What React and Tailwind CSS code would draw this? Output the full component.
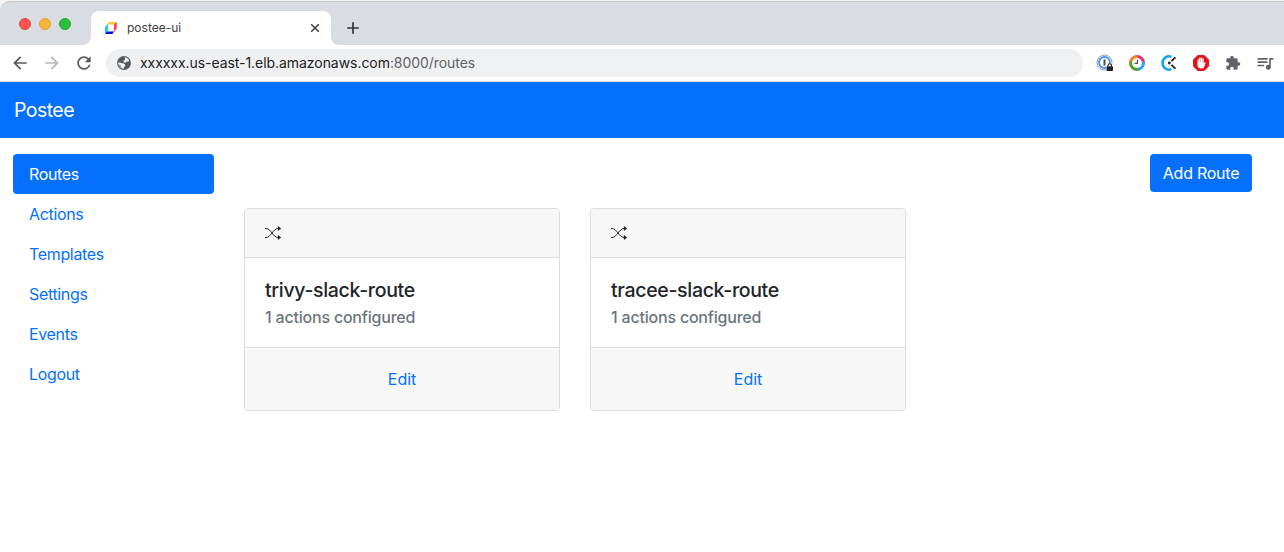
import {
  MdArrowBack,
  MdArrowForward,
  MdRefresh,
  MdAdd,
  MdExtension,
  MdQueueMusic,
} from 'react-icons/md';

function TabLogo() {
  return (
    <svg className="h-[14px] w-[14px]" viewBox="0 0 14 14" fill="none">
      <path d="M4.6 1H12.6L10.4 3.4H4.6L2.4 6.2Z" fill="#ffc62b" />
      <path d="M12.8 1V7.2L10 11V3.2Z" fill="#ff445f" />
      <path d="M3.8 2.8V10.6L1 13V6.4Z" fill="#10c2f0" />
      <path d="M3.4 10.4H10.2L8.4 13H1Z" fill="#1207d8" />
    </svg>
  );
}

function CloseIcon() {
  return (
    <svg className="h-[14px] w-[14px]" viewBox="0 0 14 14" fill="none">
      <path d="M3.2 3.2L10.8 10.8M10.8 3.2L3.2 10.8" stroke="#3c4043" strokeWidth="1.5" />
    </svg>
  );
}

function GlobeIcon() {
  return (
    <svg className="h-4 w-4" viewBox="0 0 16 16">
      <circle cx="8" cy="8" r="6.9" fill="#54585d" />
      <path
        d="M8.7 2.3C10.5 2.5 12.3 3.6 13.1 5.3L12.3 6.7L10.6 6.5L9.7 7.8L7.6 7.3L7.4 5.8L9 4.9Z"
        fill="#eff0f2"
      />
      <path
        d="M2.3 7.3L5.2 8L7.7 8.4L9.5 10L8.8 11.5L7.9 12.2L7.7 13.7C4.6 13.6 2.2 11.2 2.2 8.2Z"
        fill="#eff0f2"
      />
      <path d="M2.3 8.9L4.7 10.3L5.7 13.2C3.8 12.5 2.5 10.9 2.3 8.9Z" fill="#8b8e92" />
    </svg>
  );
}

function PasswordIcon() {
  return (
    <svg className="h-[18px] w-[18px]" viewBox="0 0 18 18">
      <circle cx="8.5" cy="8.5" r="7.5" fill="#fff" stroke="#8a8f94" strokeWidth="0.9" />
      <circle cx="8.5" cy="8.5" r="5.5" fill="#fff" stroke="#4796ef" strokeWidth="1.9" />
      <rect x="7.5" y="5.3" width="2" height="6.2" rx="0.6" fill="#4b5056" />
      <path d="M10 9.5H18V18H10Z" fill="#fff" />
      <rect x="10.5" y="12.3" width="6.5" height="4.7" rx="0.8" fill="#202124" />
      <path d="M12 12.5V11.5a1.75 1.75 0 0 1 3.5 0V12.5" fill="none" stroke="#202124" strokeWidth="1.1" />
    </svg>
  );
}

function ClockRingIcon() {
  return (
    <svg className="h-4 w-4" viewBox="0 0 16 16" fill="none">
      <circle cx="8" cy="8" r="7.8" fill="#f7354f" />
      <path d="M0.2 8A7.8 7.8 0 0 1 8 0.2L11 2.8L2.6 10.5Z" fill="#f7812c" />
      <path d="M8 0.2A7.8 7.8 0 0 1 15.8 8L13.4 10.6L9 2.4Z" fill="#ee2a76" />
      <path d="M15.8 8A7.8 7.8 0 0 1 8 15.8L5.6 13.3L13.3 5.8Z" fill="#27aee8" />
      <path d="M8 15.8A7.8 7.8 0 0 1 0.2 8L2.7 5.7L10 13.5Z" fill="#4da32f" />
      <circle cx="8" cy="8" r="5" fill="#fff" />
      <path d="M8.4 4.8V8.3H5.7" stroke="#555" strokeWidth="1.2" />
    </svg>
  );
}

function TimerIcon() {
  return (
    <svg className="h-4 w-4" viewBox="0 0 16 16" fill="none">
      <path d="M10.4 1.8A6.6 6.6 0 1 0 10.4 14.2" stroke="#12a2ee" strokeWidth="2.5" />
      <circle cx="8.3" cy="8" r="1.4" fill="#222" />
      <path d="M10.4 6.1L14.4 2.4M10.4 9.9L14.4 13.6" stroke="#222" strokeWidth="1.9" />
    </svg>
  );
}

function BlockerIcon() {
  return (
    <svg className="h-4 w-4" viewBox="0 0 16 16">
      <path d="M4.8 0H11.2L16 4.8V11.2L11.2 16H4.8L0 11.2V4.8Z" fill="#e2131b" />
      <path
        d="M4.5 4.6a.7.7 0 0 1 1.3 0V7.4h.3V3.3a.7.7 0 0 1 1.4 0V7.2h.3V2.9a.7.7 0 0 1 1.4 0V7.2h.3V3.7a.7.7 0 0 1 1.3 0V8.8l.8-1.2c.5-.6 1.3-.2 1 .5L11.1 12c-.4.9-1 1.4-2 1.4H7.4C5.7 13.4 4.5 12.2 4.5 10.6Z"
        fill="#fff"
      />
    </svg>
  );
}

function ShuffleIcon() {
  return (
    <svg className="h-4 w-4" viewBox="0 0 16 16" fill="none" stroke="#212529">
      <path d="M0 3.5H1C6 3.5 8 12.5 13 12.5H14" strokeWidth="1" />
      <path d="M0 12.5H1C6 12.5 8 3.5 13 3.5H14" strokeWidth="1" />
      <path
        d="M13 1.3L16 3.5L13 5.7ZM13 10.3L16 12.5L13 14.7Z"
        fill="#212529"
        strokeWidth="0.3"
        strokeLinejoin="round"
      />
    </svg>
  );
}

function TabStrip() {
  return (
    <div className="flex h-[45px] items-end bg-[#f3f3f3] pt-px">
      <div className="flex h-11 w-full items-end rounded-tl-[10px] border-t border-[#c6c6c6] bg-[#d9dce1]">
        <div className="flex h-[42px] w-[83px] gap-2 pl-[19px] pt-[15px]">
          <span className="h-3 w-3 rounded-full border border-[#e2453f] bg-[#ff544e]" />
          <span className="h-3 w-3 rounded-full border border-[#df9c34] bg-[#fdb43d]" />
          <span className="h-3 w-3 rounded-full border border-[#21a535] bg-[#27c13e]" />
        </div>
        <div className="h-2 w-2 bg-white">
          <div className="h-2 w-2 rounded-br-lg bg-[#d9dce1]" />
        </div>
        <div className="flex h-[34px] w-60 items-center rounded-t-lg bg-white pl-[13px] pr-[9px]">
          <TabLogo />
          <span className="ml-[9px] flex-1 text-[12px] text-[#3c4043]">postee-ui</span>
          <CloseIcon />
        </div>
        <div className="h-2 w-2 bg-white">
          <div className="h-2 w-2 rounded-bl-lg bg-[#d9dce1]" />
        </div>
        <div className="flex h-[34px] items-center pl-1">
          <MdAdd className="h-5 w-5 text-[#303235]" />
        </div>
      </div>
    </div>
  );
}

function Toolbar() {
  return (
    <div className="flex h-[37px] items-center border-b border-[#d8dadd] bg-white pr-[3px] pl-[10px]">
      <div className="flex w-24 gap-3 text-[#54585d]">
        <MdArrowBack className="h-5 w-5" />
        <MdArrowForward className="h-5 w-5 text-[#b6b8ba]" />
        <MdRefresh className="h-5 w-5" />
      </div>
      <div className="flex h-7 w-[977px] items-center rounded-full bg-[#eff0f2] pl-[10px]">
        <GlobeIcon />
        <span className="mb-0.5 ml-2 text-[14px] tracking-[-0.055px] text-[#202124]">
          xxxxxx.us-east-1.elb.amazonaws.com<span className="text-[#5f6368]">:8000/routes</span>
        </span>
      </div>
      <div className="ml-auto grid auto-cols-[32px] grid-flow-col items-center justify-items-center">
        <PasswordIcon />
        <ClockRingIcon />
        <TimerIcon />
        <BlockerIcon />
        <MdExtension className="h-4 w-4 text-[#5f6368]" />
        <MdQueueMusic className="h-5 w-5 text-[#5f6368]" />
      </div>
    </div>
  );
}

const navItems = ['Routes', 'Actions', 'Templates', 'Settings', 'Events', 'Logout'];

function Sidebar() {
  return (
    <nav className="w-[201px] tracking-[-0.34px]">
      {navItems.map((item, i) => (
        <a
          key={item}
          className={
            i === 0
              ? 'flex h-10 items-center rounded bg-[#0670fd] px-4 text-white'
              : 'flex h-10 items-center px-4 text-[#0670fd]'
          }
        >
          {item}
        </a>
      ))}
    </nav>
  );
}

function RouteCard({ name }) {
  return (
    <article className="w-[316px] overflow-hidden rounded border border-[#dcdcdc] bg-white">
      <header className="flex h-[49px] items-center border-b border-[#dcdcdc] bg-[#f7f7f7] px-5">
        <ShuffleIcon />
      </header>
      <div className="h-[89px] px-5 pt-5">
        <h5 className="text-[19.5px] leading-6 font-medium tracking-[-0.32px] text-[#212529]">{name}</h5>
        <h6 className="mt-[6px] text-base leading-[19px] font-medium tracking-[-0.2px] text-[#6c757d]">
          1 actions configured
        </h6>
      </div>
      <footer className="flex h-[63px] items-center justify-center border-t border-[#dcdcdc] bg-[#f7f7f7] tracking-[-0.05px] text-[#0670fd]">
        <a>Edit</a>
      </footer>
    </article>
  );
}

export default function App() {
  return (
    <div className="h-[552px] w-[1284px] overflow-hidden bg-white font-['Inter',sans-serif] text-base">
      <TabStrip />
      <Toolbar />
      <div className="flex h-14 items-center bg-[#0670fd] pt-0.5 pl-[14px] text-[19.5px] tracking-[-0.55px] text-white">
        Postee
      </div>
      <div className="flex pt-4 pr-8 pl-[13px]">
        <Sidebar />
        <main className="ml-[30px] flex flex-1 flex-col gap-4">
          <button className="flex h-[38px] w-[102px] items-center justify-center self-end rounded bg-[#0670fd] tracking-[-0.25px] whitespace-nowrap text-white">
            Add Route
          </button>
          <div className="flex gap-[30px]">
            <RouteCard name="trivy-slack-route" />
            <RouteCard name="tracee-slack-route" />
          </div>
        </main>
      </div>
    </div>
  );
}
